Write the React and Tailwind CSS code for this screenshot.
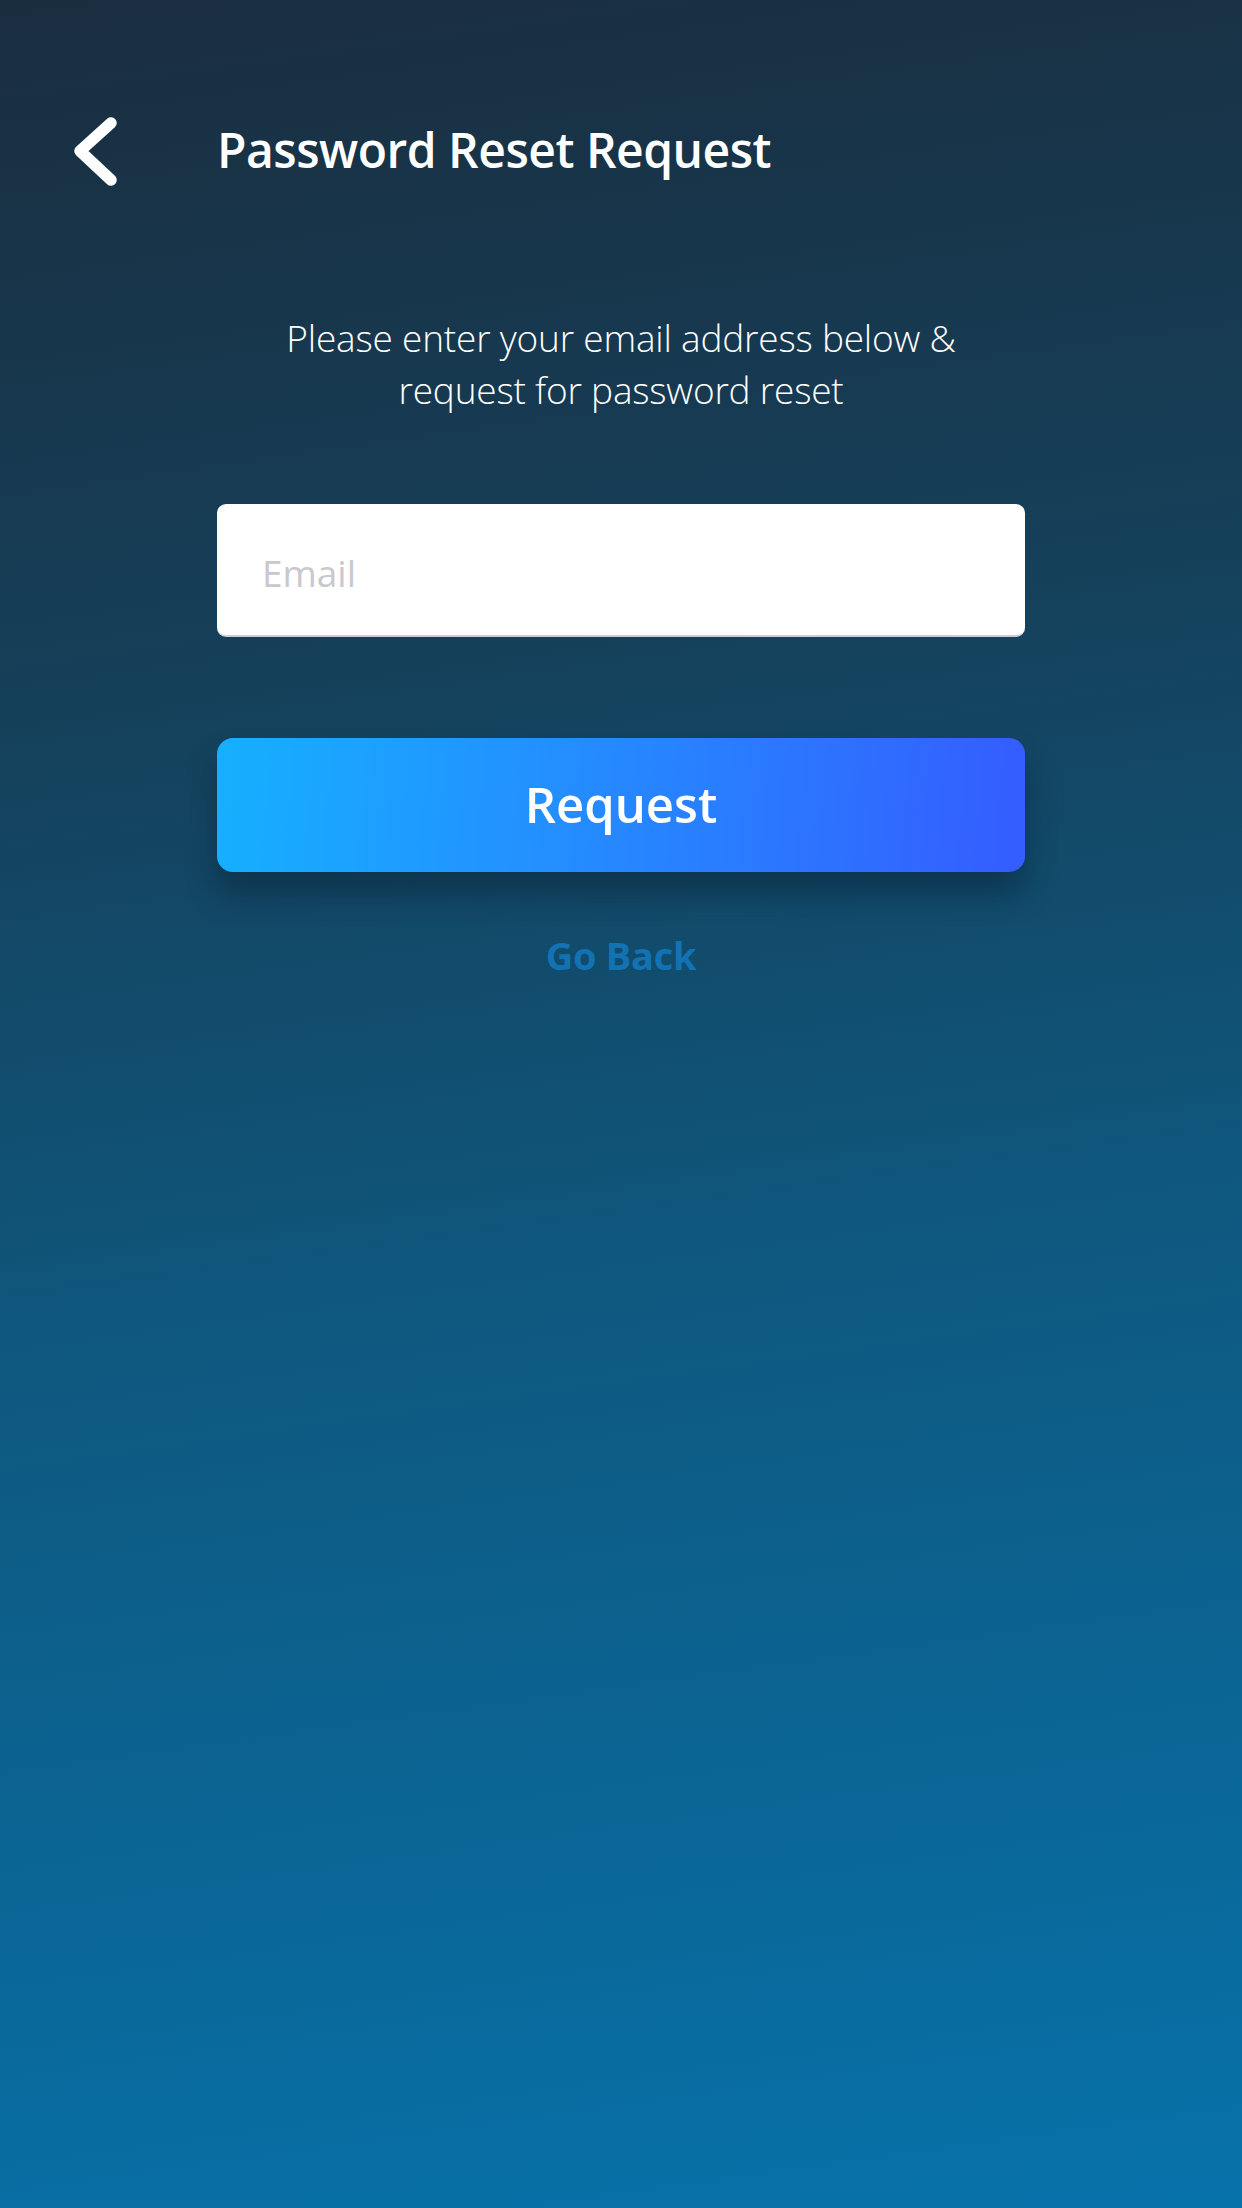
export default function App() {
  return (
    <div
      className="min-h-[2208px] w-full overflow-hidden bg-[linear-gradient(172deg,#1a2d3f_0%,#15405a_30%,#0e5a82_60%,#0772aa_100%)] pt-[115px] text-white"
      style={{ fontFamily: '"Open Sans", "Noto Sans", sans-serif' }}
    >
      <header className="flex h-[70px] items-center">
        <button className="ml-[72px] flex h-[70px] w-[50px] items-center justify-center">
          <svg width="50" height="74" viewBox="0 0 50 74" fill="none">
            <path d="M39 10 L8 38 L39 67" stroke="white" strokeWidth="11.5" strokeLinecap="round" strokeLinejoin="round" />
          </svg>
        </button>
        <h1 className="ml-[95px] text-[48px] font-semibold leading-none tracking-[-0.5px]">Password Reset Request</h1>
      </header>

      <main className="mx-auto flex w-[808px] flex-col items-stretch">
        <p className="mt-[127px] text-center text-[37px] font-light leading-[52px] tracking-[-0.2px]">
          Please enter your email address below &amp;
          <br />
          request for password reset
        </p>

        <input
          type="email"
          placeholder="Email"
          className="mt-[88px] h-[133px] w-full rounded-[9px] border-b-2 border-[#c9ced6] bg-white px-[45px] pt-[6px] text-[37px] text-gray-800 outline-none placeholder:text-[#c8c8cd]"
        />

        <button className="mt-[101px] h-[134px] w-full rounded-[16px] bg-[linear-gradient(95deg,#16b0ff_0%,#2390ff_40%,#2d72ff_75%,#355cff_100%)] text-[49px] font-semibold text-white shadow-[0_22px_30px_rgba(6,30,50,0.45)]">
          Request
        </button>

        <button className="mt-[58px] self-center text-[38px] font-bold leading-[50px] tracking-[-0.3px] text-[#1272b2]">
          Go Back
        </button>
      </main>
    </div>
  );
}
